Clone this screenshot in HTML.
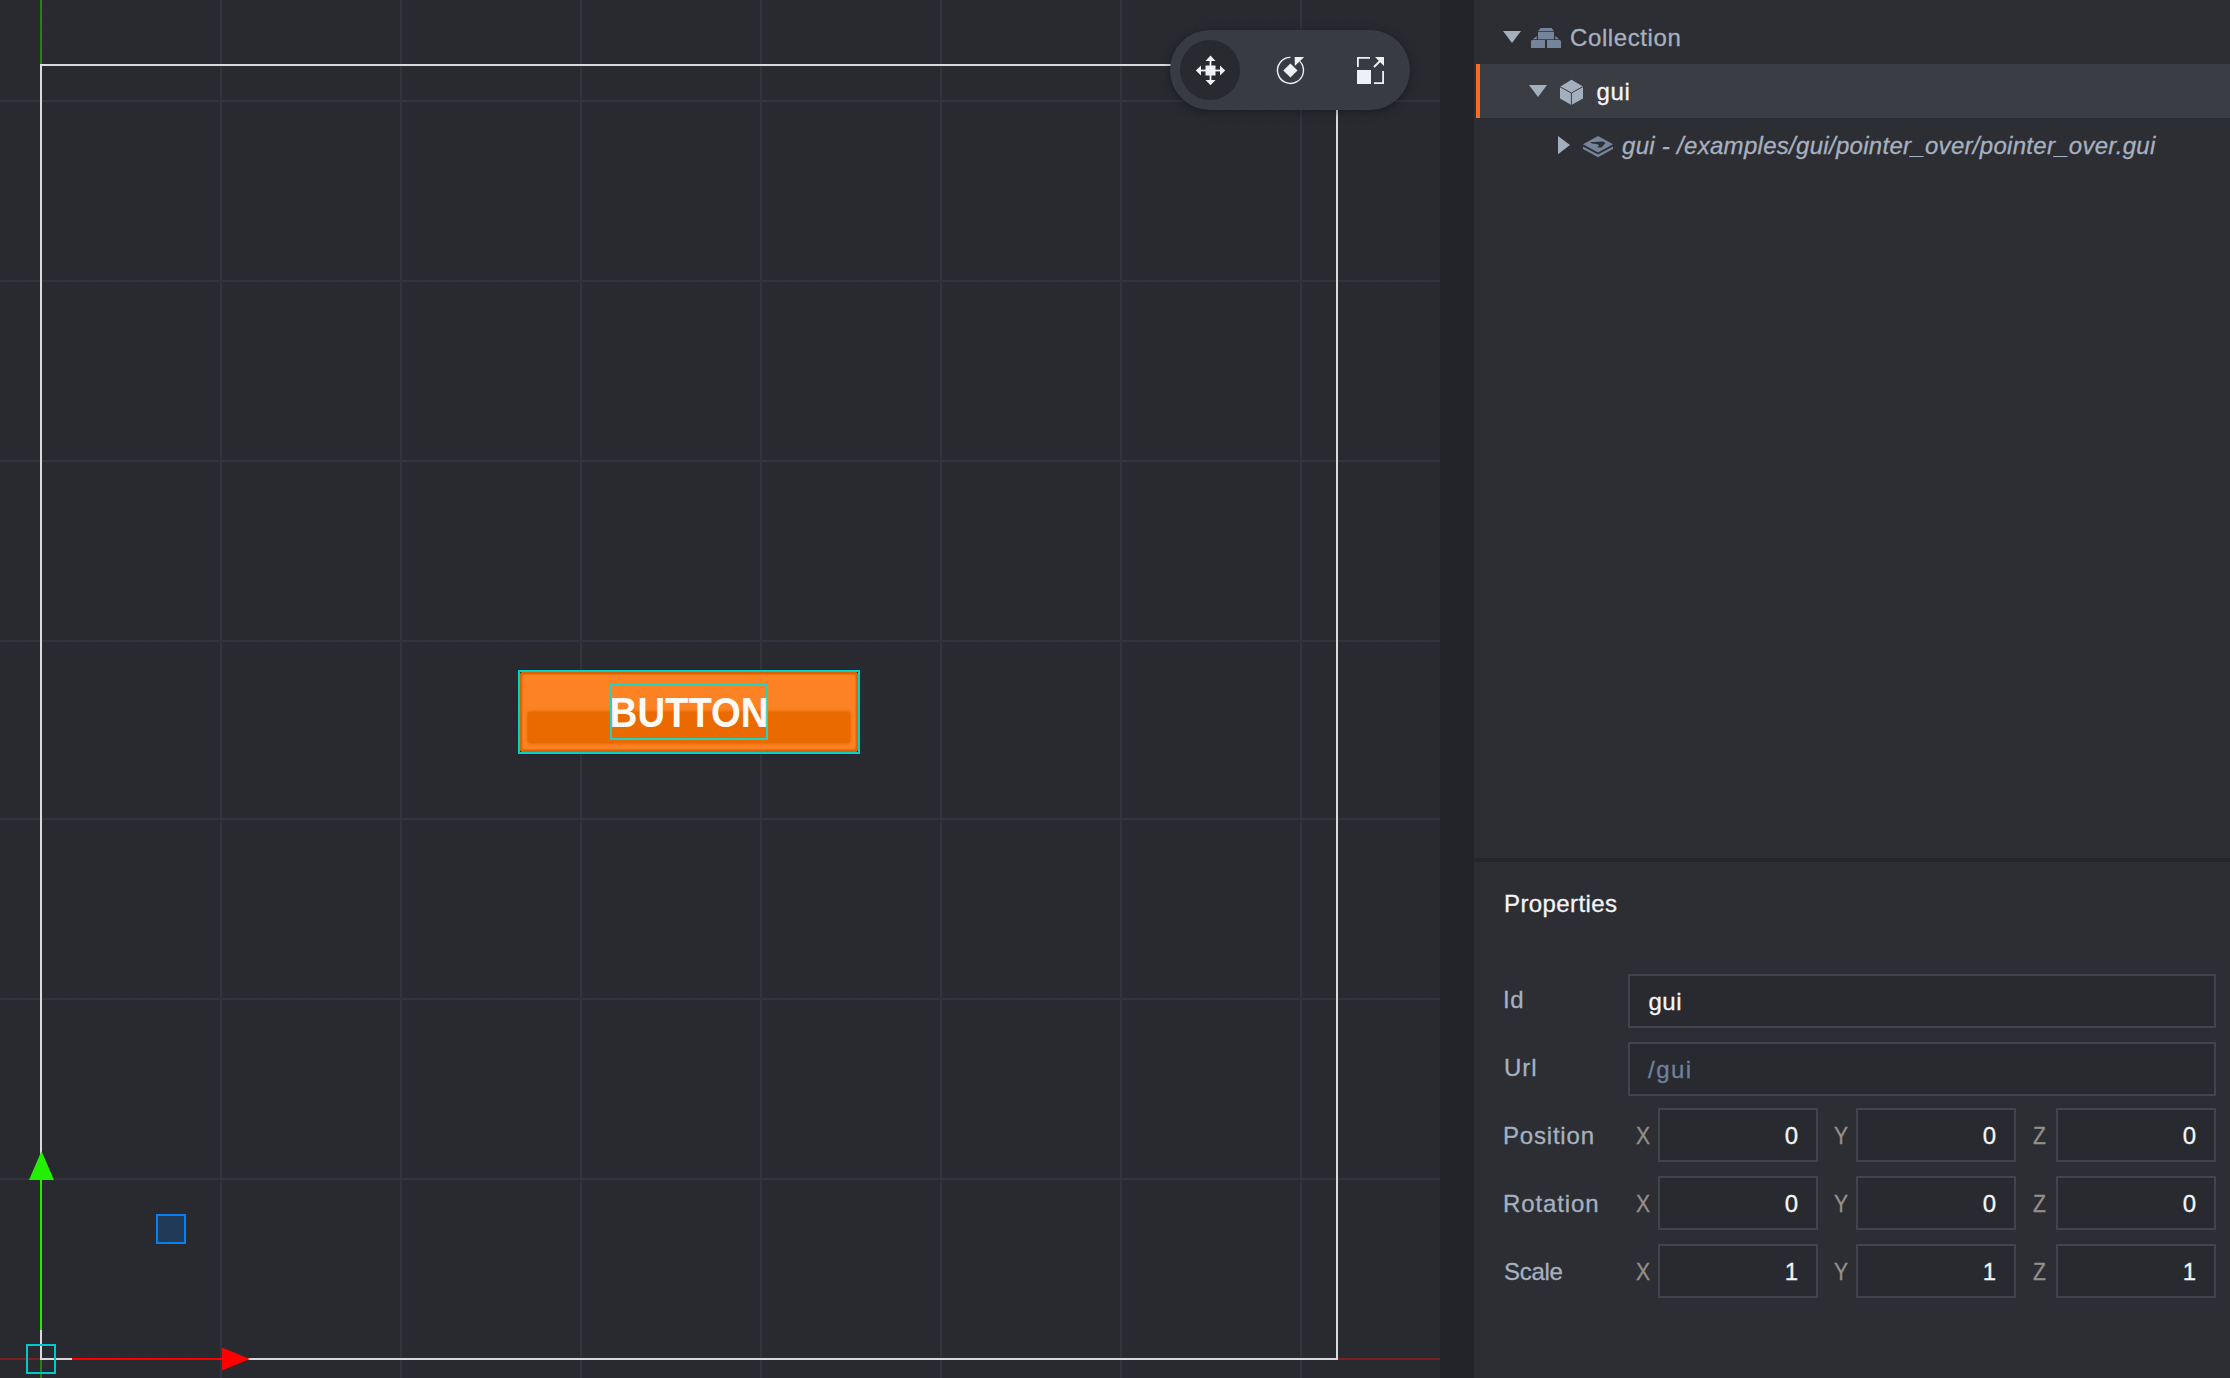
<!DOCTYPE html>
<html lang="en">
<head>
<meta charset="utf-8">
<title>Defold Editor</title>
<style>
html,body{margin:0;padding:0;}
body{width:2230px;height:1378px;overflow:hidden;position:relative;background:#2d2e34;font-family:"Liberation Sans",sans-serif;}
.abs{position:absolute;}
#scene{position:absolute;left:0;top:0;width:1440px;height:1378px;background:#292a30;overflow:hidden;}
#divider{position:absolute;left:1440px;top:0;width:34px;height:1378px;background:#22242a;}
#panel{position:absolute;left:1474px;top:0;width:756px;height:1378px;background:#2d2e34;}
#hsplit{position:absolute;left:1474px;top:858px;width:756px;height:4px;background:#25262c;}
#selrow{position:absolute;left:1476px;top:64px;width:754px;height:54px;background:#3b3d44;}
#selbar{position:absolute;left:1476px;top:64px;width:4px;height:54px;background:#ff6a1f;}
.t{position:absolute;white-space:nowrap;font-size:24px;line-height:24px;color:#a6b1bf;transform-origin:0 50%;-webkit-text-stroke:0.3px;}
.w{color:#f3f5f9;}
.box{position:absolute;box-sizing:border-box;height:54px;border:2px solid #42444b;background:#292a30;}
.xyz{color:#93908b;transform:scaleX(0.88);transform-origin:50% 50%;}
.dim{color:#6f819a;}
.num{text-align:right;}
</style>
</head>
<body>
<div id="scene">
<svg class="abs" style="left:0;top:0" width="1440" height="1378" viewBox="0 0 1440 1378" shape-rendering="crispEdges">
  <defs>
    <pattern id="minor" x="40" y="100" width="18" height="18" patternUnits="userSpaceOnUse">
      <rect x="0" y="0" width="1" height="18" fill="#2a2b31"/>
      <rect x="0" y="0" width="18" height="1" fill="#2a2b31"/>
    </pattern>
  </defs>
  <rect x="0" y="0" width="1440" height="1378" fill="url(#minor)"/>
  <g fill="#31343a">
    <rect x="220" y="0" width="2" height="1378"/>
    <rect x="400" y="0" width="2" height="1378"/>
    <rect x="580" y="0" width="2" height="1378"/>
    <rect x="760" y="0" width="2" height="1378"/>
    <rect x="940" y="0" width="2" height="1378"/>
    <rect x="1120" y="0" width="2" height="1378"/>
    <rect x="1300" y="0" width="2" height="1378"/>
    <rect x="0" y="100" width="1440" height="2"/>
    <rect x="0" y="280" width="1440" height="2"/>
    <rect x="0" y="460" width="1440" height="2"/>
    <rect x="0" y="640" width="1440" height="2"/>
    <rect x="0" y="818" width="1440" height="2"/>
    <rect x="0" y="998" width="1440" height="2"/>
    <rect x="0" y="1178" width="1440" height="2"/>
  </g>
  <!-- world axes (dim) -->
  <rect x="40" y="0" width="2" height="1378" fill="#2f7d1a"/>
  <rect x="0" y="1358" width="1440" height="2" fill="#7a1f22"/>
  <!-- gui bounds -->
  <rect x="40" y="64" width="2" height="1296" fill="#d9dadc"/>
  <rect x="1336" y="64" width="2" height="1296" fill="#d9dadc"/>
  <rect x="40" y="64" width="1298" height="2" fill="#d9dadc"/>
  <rect x="40" y="1358" width="1298" height="2" fill="#d9dadc"/>
  <!-- manipulator -->
  <rect x="40" y="1180" width="2" height="150" fill="#2fe800"/>
  <polygon points="41.5,1151 54,1180 29,1180" fill="#22f000" shape-rendering="geometricPrecision"/>
  <rect x="72" y="1358" width="150" height="2" fill="#ff0000"/>
  <polygon points="222,1347.5 250,1359 222,1370.5" fill="#ff0000" shape-rendering="geometricPrecision"/>
  <rect x="157" y="1215" width="28" height="28" fill="#213a58" stroke="#0a7ff0" stroke-width="2"/>
  <rect x="27" y="1345" width="28" height="28" fill="none" stroke="#00c8d0" stroke-width="2"/>
</svg>

<!-- gui button node -->
<div class="abs" style="left:518px;top:670px;width:342px;height:84px;box-sizing:border-box;border:2px solid #00d2cc;background:#292a30;"></div>
<div class="abs" id="btn" style="left:520px;top:672px;width:338px;height:80px;border-radius:4px;background:#fc8224;box-shadow:inset 0 0 2px 2px #da6303,inset 0 1px 2px 1px #da6303,inset 0 -1px 2px 1px #da6303;overflow:hidden;">
  <div class="abs" style="left:8px;top:40px;width:322px;height:31px;background:#ea6a00;border-radius:3px;box-shadow:0 0 2.5px 1px #ea6a00;"></div>
</div>
<div class="abs" style="left:610px;top:684px;width:158px;height:56px;box-sizing:border-box;border:2px solid #1fd3c4;"></div>
<div class="abs" id="btntext" style="left:539px;top:691px;width:300px;height:44px;line-height:44px;text-align:center;font-weight:bold;font-size:42.5px;color:#fffaf5;white-space:nowrap;"><span id="btnspan" style="display:inline-block;transform:scaleX(0.90);transform-origin:50% 50%;">BUTTON</span></div>
<!-- toolbar -->
<div class="abs" id="pill" style="left:1170px;top:30px;width:240px;height:80px;border-radius:40px;background:#393b43;box-shadow:0 2px 10px rgba(0,0,0,0.35);"></div>
<div class="abs" style="left:1180px;top:40px;width:60px;height:60px;border-radius:30px;background:#292a30;"></div>
<svg class="abs" style="left:1170px;top:30px" width="240" height="80" viewBox="1170 30 240 80">
  <g fill="#eef0f5">
    <!-- move -->
    <rect x="1205.5" y="65.5" width="10" height="10"/>
    <polygon points="1210.5,55.5 1215.5,61 1205.5,61"/>
    <rect x="1209.6" y="60.5" width="1.8" height="5.5"/>
    <polygon points="1210.5,85.2 1215.5,80 1205.5,80"/>
    <rect x="1209.6" y="75" width="1.8" height="5.5"/>
    <polygon points="1195.8,70.5 1201,65.5 1201,75.5"/>
    <rect x="1200.5" y="69.6" width="5.5" height="1.8"/>
    <polygon points="1225.2,70.5 1220,65.5 1220,75.5"/>
    <rect x="1215" y="69.6" width="5.5" height="1.8"/>
    <!-- rotate -->
    <polygon points="1290.4,63.4 1297.5,70.5 1290.4,77.6 1283.3,70.5"/>
    <polygon points="1294.7,57 1304.2,57 1294.8,65.9"/>
    <!-- scale -->
    <rect x="1357" y="70" width="14" height="14"/>
    <polygon points="1375,57 1384,57 1384,66"/>
  </g>
  <g fill="none" stroke="#eef0f5" stroke-width="1.6">
    <path d="M 1290.4 57.4 A 13 13 0 1 0 1299.85 61.37" stroke-width="1.4"/>
    <path d="M 1357.9 67 V 57.9 H 1370" stroke-width="1.8"/>
    <path d="M 1383.1 71 V 83.1 H 1374" stroke-width="1.8"/>
    <path d="M 1381.5 59.5 L 1374 67" stroke-width="2"/>
  </g>
</svg>
</div>
<div id="divider"></div>
<div id="panel"></div>
<div id="hsplit"></div>
<div id="selrow"></div>
<div id="selbar"></div>

<!-- outline tree -->
<svg class="abs" style="left:1474px;top:0" width="756" height="180" viewBox="1474 0 756 180">
  <g fill="#a3afbd">
    <polygon points="1503,31 1521,31 1512,43"/>
    <polygon points="1529,85 1547,85 1538,97"/>
    <polygon points="1558,136 1570,145 1558,154.2"/>
    <!-- cube -->
    <polygon points="1571.5,79.8 1583,86.6 1583,98.6 1571.4,105 1560,98.6 1560,86.8"/>
  </g>
  <g fill="none" stroke="#3b3d44" stroke-width="1">
    <path d="M 1560 86.8 L 1571.4 93 L 1583 86.6 M 1571.4 93 V 105"/>
  </g>
  <g fill="#75849a">
    <!-- collection -->
    <polygon points="1540.6,28 1551.6,28 1554,31.3 1538,31.3"/>
    <rect x="1538" y="32" width="16" height="7.3"/>
    <polygon points="1532.6,39.3 1536.8,36 1536.8,39.3"/>
    <polygon points="1559.4,39.3 1555.2,36 1555.2,39.3"/>
    <polygon points="1532,40 1545,40 1545,48 1531,48 1531,41"/>
    <polygon points="1547,40 1560,40 1561,41 1561,48 1547,48"/>
    <!-- gui layers -->
    <polygon points="1598,136 1613,144.2 1598,152.4 1583,144.2"/>
    <polygon points="1583,146.4 1598,154.5 1613,146.4 1613,149 1598,157.2 1583,149"/>
  </g>
  <path d="M 1590 142.2 L 1603 141.6 L 1605.5 143 L 1601.5 147.6 L 1597.5 147.4 L 1599 145 L 1596.5 144 L 1592 143.6 Z" fill="#2d2e34"/>
</svg>
<div class="t" id="t_coll" style="left:1570px;top:26px;letter-spacing:0.6px;">Collection</div>
<div class="t w" id="t_gui" style="left:1596.5px;top:80px;letter-spacing:0.6px;">gui</div>
<div class="t" id="t_path" style="left:1622px;top:134px;font-style:italic;letter-spacing:0.29px;">gui - /examples/gui/pointer_over/pointer_over.gui</div>
<!-- properties -->
<div class="t w" id="t_props" style="left:1504px;top:892px;letter-spacing:0.4px;">Properties</div>
<div class="t" id="t_id" style="left:1503px;top:988px;letter-spacing:0.5px;">Id</div>
<div class="t" id="t_url" style="left:1504px;top:1056px;letter-spacing:1px;">Url</div>
<div class="t" id="t_pos" style="left:1503px;top:1124px;letter-spacing:0.8px;">Position</div>
<div class="t" id="t_rot" style="left:1503px;top:1192px;letter-spacing:0.9px;">Rotation</div>
<div class="t" id="t_scl" style="left:1504px;top:1260px;letter-spacing:-0.3px;">Scale</div>
<div class="box" style="left:1628px;top:974px;width:588px;"></div>
<div class="box" style="left:1628px;top:1042px;width:588px;"></div>
<div class="t w" id="t_idv" style="left:1648.5px;top:990px;letter-spacing:0.5px;">gui</div>
<div class="t dim" id="t_urlv" style="left:1648px;top:1058px;letter-spacing:1.5px;">/gui</div>
<div class="t xyz" id="l_posX" style="left:1635px;top:1124px;">X</div>
<div class="box" style="left:1658px;top:1108px;width:160px;"></div>
<div class="t w num" id="v_posX" style="left:1658px;top:1124px;width:140px;">0</div>
<div class="t xyz" id="l_posY" style="left:1832.5px;top:1124px;">Y</div>
<div class="box" style="left:1856px;top:1108px;width:160px;"></div>
<div class="t w num" id="v_posY" style="left:1856px;top:1124px;width:140px;">0</div>
<div class="t xyz" id="l_posZ" style="left:2031.5px;top:1124px;">Z</div>
<div class="box" style="left:2056px;top:1108px;width:160px;"></div>
<div class="t w num" id="v_posZ" style="left:2056px;top:1124px;width:140px;">0</div>
<div class="t xyz" id="l_rotX" style="left:1635px;top:1192px;">X</div>
<div class="box" style="left:1658px;top:1176px;width:160px;"></div>
<div class="t w num" id="v_rotX" style="left:1658px;top:1192px;width:140px;">0</div>
<div class="t xyz" id="l_rotY" style="left:1832.5px;top:1192px;">Y</div>
<div class="box" style="left:1856px;top:1176px;width:160px;"></div>
<div class="t w num" id="v_rotY" style="left:1856px;top:1192px;width:140px;">0</div>
<div class="t xyz" id="l_rotZ" style="left:2031.5px;top:1192px;">Z</div>
<div class="box" style="left:2056px;top:1176px;width:160px;"></div>
<div class="t w num" id="v_rotZ" style="left:2056px;top:1192px;width:140px;">0</div>
<div class="t xyz" id="l_sclX" style="left:1635px;top:1260px;">X</div>
<div class="box" style="left:1658px;top:1244px;width:160px;"></div>
<div class="t w num" id="v_sclX" style="left:1658px;top:1260px;width:140px;">1</div>
<div class="t xyz" id="l_sclY" style="left:1832.5px;top:1260px;">Y</div>
<div class="box" style="left:1856px;top:1244px;width:160px;"></div>
<div class="t w num" id="v_sclY" style="left:1856px;top:1260px;width:140px;">1</div>
<div class="t xyz" id="l_sclZ" style="left:2031.5px;top:1260px;">Z</div>
<div class="box" style="left:2056px;top:1244px;width:160px;"></div>
<div class="t w num" id="v_sclZ" style="left:2056px;top:1260px;width:140px;">1</div>
</body>
</html>
